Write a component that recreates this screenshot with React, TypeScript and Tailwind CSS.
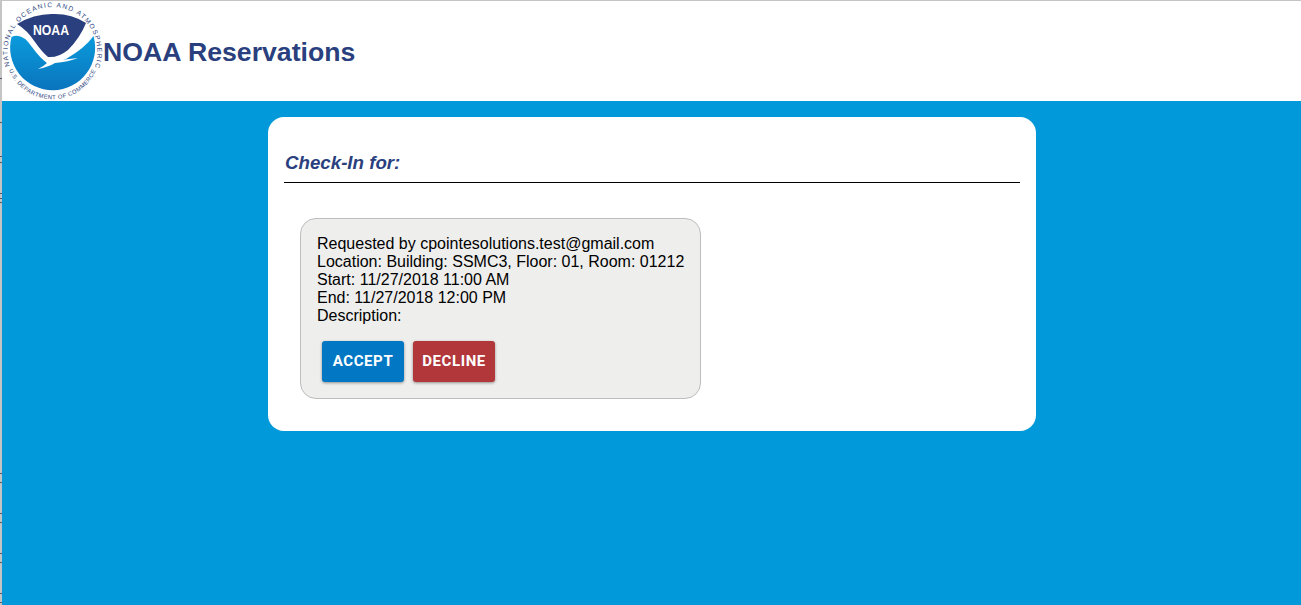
const edgeTicks = [78, 122, 156, 162, 193, 198, 202, 473, 482, 513, 522, 553, 562, 593, 602]

function NoaaLogo() {
  return (
    <svg width="104" height="100" viewBox="2 1 104 100" className="shrink-0 block">
      <defs>
        <path id="ring-top" d="M 9.7 66 A 45 45 0 1 1 95.3 66" />
        <path id="ring-bottom" d="M 9 70 A 47 47 0 0 0 96 70" />
        <linearGradient id="sea" x1="0" y1="0" x2="0" y2="1">
          <stop offset="0" stopColor="#0a9bdc" />
          <stop offset="1" stopColor="#0a74bd" />
        </linearGradient>
      </defs>
      {/* sea */}
      <path d="M11.5 37 A42.5 42.5 0 1 0 93.5 36 Q85 48 66 59 L50 64 L47 63 Q40 58 32 47 Q22 32 11.5 37 Z" fill="url(#sea)" />
      {/* sky */}
      <path d="M17 24 Q35 13 55 14 Q72 14 86 23 Q80 38 68 50 Q58 58 48 57 Q42 52 35 42 Q27 30 17 24 Z" fill="#2a3f7e" />
      {/* gull tail and wing */}
      <path d="M46 60 L60 60 Q70 59 78 58 Q68 62 55 63 Q48 67 38 69 Q44 66 47 63 Z" fill="#ffffff" />
      <text x="51" y="35" textAnchor="middle" fill="#ffffff" fontFamily="'Liberation Sans', sans-serif" fontWeight="700" fontSize="14" textLength="36" lengthAdjust="spacingAndGlyphs">NOAA</text>
      <text fill="#2a3f7e" fontFamily="'Liberation Sans', sans-serif" fontSize="6.6">
        <textPath href="#ring-top" textLength="248" lengthAdjust="spacing">NATIONAL OCEANIC AND ATMOSPHERIC ADMINISTRATION</textPath>
      </text>
      <text fill="#2a3f7e" fontFamily="'Liberation Sans', sans-serif" fontSize="5.8">
        <textPath href="#ring-bottom" textLength="110" lengthAdjust="spacing">U.S. DEPARTMENT OF COMMERCE</textPath>
      </text>
    </svg>
  )
}

export default function App() {
  return (
    <div className="relative h-[605px] w-[1301px] overflow-hidden flex flex-col bg-[#0299da] font-['Liberation_Sans',Arial,sans-serif]">
      {edgeTicks.map((y) => (
        <span key={y} className="absolute left-0 h-px w-[2px] bg-[#565b70]" style={{ top: y }} />
      ))}

      <header className="h-[101px] shrink-0 flex items-center bg-white border-t border-t-[#c4c4c4] border-l-2 border-l-[#c4c4c4]">
        <NoaaLogo />
        <h1 className="-ml-[3px] pt-[1px] text-[26.67px] font-bold text-[#2a3f7e]">NOAA Reservations</h1>
      </header>

      <main className="flex flex-1 justify-center border-l-2 border-l-[#c4c4c4] pl-[1px] pt-4">
        <section className="w-[768px] h-[314px] rounded-[16px] bg-white px-4 pt-[33px]">
          <h2 className="pl-[1px] text-[18.72px] leading-[24px] font-bold italic text-[#2a3f7e] border-b border-b-black pt-[1px] pb-[7px]">
            Check-In for:
          </h2>

          <div className="mt-[35px] ml-4 w-[401px] h-[181px] rounded-[16px] border border-[#bdbdbd] bg-[#eeeeed] pl-4 pt-4">
            <div className="text-[16px] leading-[18px] text-black">
              <p>Requested by cpointesolutions.test@gmail.com</p>
              <p>Location: Building: SSMC3, Floor: 01, Room: 01212</p>
              <p>Start: 11/27/2018 11:00 AM</p>
              <p>End: 11/27/2018 12:00 PM</p>
              <p>Description:</p>
            </div>
            <div className="mt-4 ml-[5px] flex gap-[9px]">
              <button className="h-[41px] w-[82px] rounded-[3px] bg-[#0277c4] text-[15px] font-bold tracking-[0.6px] text-white font-['Roboto',sans-serif] shadow-[0_1px_3px_rgba(0,0,0,0.4)]">
                ACCEPT
              </button>
              <button className="h-[41px] w-[82px] rounded-[3px] bg-[#b2373a] text-[15px] font-bold tracking-[0.6px] text-white font-['Roboto',sans-serif] shadow-[0_1px_3px_rgba(0,0,0,0.4)]">
                DECLINE
              </button>
            </div>
          </div>
        </section>
      </main>
    </div>
  )
}
